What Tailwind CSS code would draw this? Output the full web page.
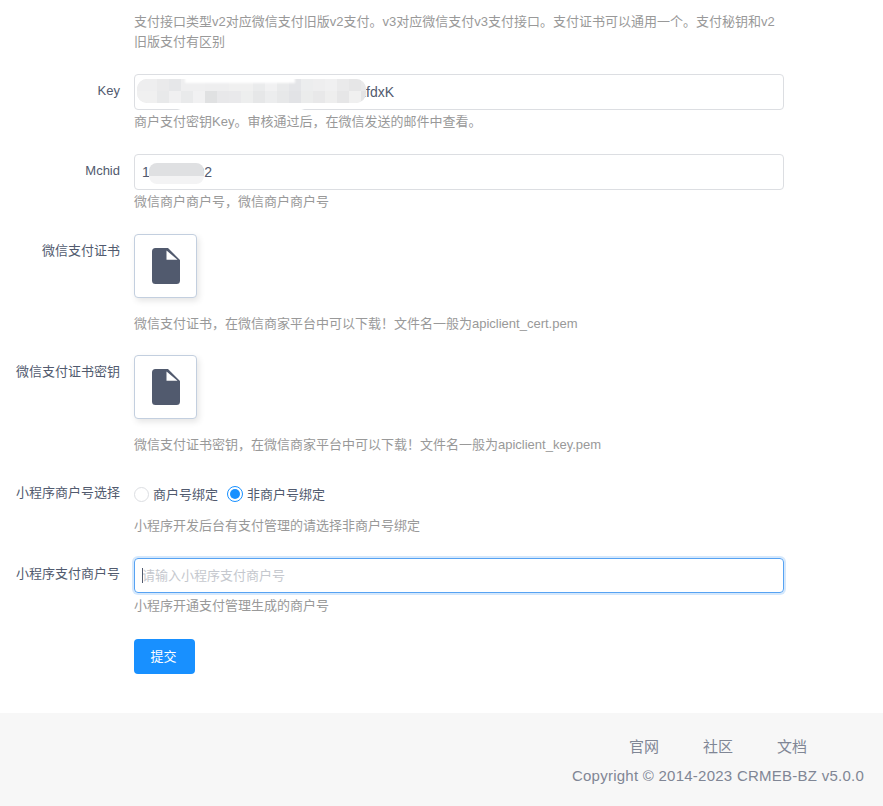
<!DOCTYPE html>
<html lang="zh-CN">
<head>
    <meta charset="UTF-8">
    <title>支付配置</title>
    <script src="https://cdn.jsdelivr.net/npm/@tailwindcss/browser@4"></script>
</head>
<body class="bg-white font-['Liberation_Sans','Noto_Sans_CJK_SC',sans-serif] text-[13px] text-[#515a6e] h-[806px] overflow-hidden">
    <div class="h-[713px] pt-[12px]">
        <!-- 接口类型说明 -->
        <div class="pl-[134px] mb-[22px]">
            <p class="w-[650px] leading-[20px] text-[#999]">支付接口类型v2对应微信支付旧版v2支付。v3对应微信支付v3支付接口。支付证书可以通用一个。支付秘钥和v2<br>旧版支付有区别</p>
        </div>

        <!-- Key -->
        <div class="flex mb-[22px]">
            <label class="w-[120px] shrink-0 text-right leading-[34px]">Key</label>
            <div class="ml-[14px] w-[650px]">
                <div class="relative">
                    <input type="text" value="xxxxxxxxxxxxxxxxxxxxxxxxxxxxxxxxfdxK" class="w-full h-[36px] px-[7px] border border-[#dcdee2] rounded-[4px] text-[14px] text-[#515a6e] outline-none">
                    <!-- 打码 -->
                    <div class="absolute left-[45px] top-[28px] w-[124px] h-[10px] bg-white blur-[1px]"></div>
                    <div class="absolute left-[3px] top-[5px] w-[229px] h-[24px] rounded-[10px] overflow-hidden blur-[0.5px] flex flex-col bg-[#ececed]">
                        <div class="flex h-[12px]">
                            <div class="w-[20px] bg-[#eeeeef]"></div>
                            <div class="w-[12px] bg-[#eaeaeb]"></div>
                            <div class="w-[12px] bg-[#e6e7e9]"></div>
                            <div class="w-[24px] bg-[#efeff0]"></div>
                            <div class="w-[24px] bg-[#eeeeef]"></div>
                            <div class="w-[24px] bg-[#f0f0f0]"></div>
                            <div class="w-[12px] bg-[#eaebec]"></div>
                            <div class="w-[12px] bg-[#f1f1f2]"></div>
                            <div class="w-[12px] bg-[#e9eaeb]"></div>
                            <div class="w-[12px] bg-[#e4e5e8]"></div>
                            <div class="w-[12px] bg-[#ecedee]"></div>
                            <div class="w-[12px] bg-[#eeeeef]"></div>
                            <div class="w-[12px] bg-[#f0f0f1]"></div>
                            <div class="w-[12px] bg-[#eaeaeb]"></div>
                            <div class="w-[12px] bg-[#e6e6e7]"></div>
                            <div class="flex-1 bg-[#e9e9ea]"></div>
                        </div>
                        <div class="flex h-[12px]">
                            <div class="w-[20px] bg-[#f0f0f0]"></div>
                            <div class="w-[12px] bg-[#e8e9ea]"></div>
                            <div class="w-[12px] bg-[#f0f0f1]"></div>
                            <div class="w-[12px] bg-[#e9eaeb]"></div>
                            <div class="w-[12px] bg-[#f1f1f2]"></div>
                            <div class="w-[12px] bg-[#e0e1e2]"></div>
                            <div class="w-[12px] bg-[#e8e8ea]"></div>
                            <div class="w-[12px] bg-[#e9e9eb]"></div>
                            <div class="w-[12px] bg-[#edeeee]"></div>
                            <div class="w-[12px] bg-[#e6e7e8]"></div>
                            <div class="w-[12px] bg-[#ecedee]"></div>
                            <div class="w-[12px] bg-[#e7e8e9]"></div>
                            <div class="w-[12px] bg-[#e2e3e6]"></div>
                            <div class="w-[12px] bg-[#ebecec]"></div>
                            <div class="w-[12px] bg-[#e8e8e9]"></div>
                            <div class="w-[12px] bg-[#eeeeee]"></div>
                            <div class="w-[12px] bg-[#e6e6e7]"></div>
                            <div class="w-[12px] bg-[#f0f0f0]"></div>
                            <div class="flex-1 bg-[#e4e4e5]"></div>
                        </div>
                    </div>
                    <div class="absolute left-[51px] top-[3px] w-[110px] h-[6px] bg-white blur-[1px]"></div>
                </div>
                <p class="mt-[2px] leading-[20px] text-[#999]">商户支付密钥Key。审核通过后，在微信发送的邮件中查看。</p>
            </div>
        </div>

        <!-- Mchid -->
        <div class="flex mb-[22px]">
            <label class="w-[120px] shrink-0 text-right leading-[34px]">Mchid</label>
            <div class="ml-[14px] w-[650px]">
                <div class="relative">
                    <input type="text" value="100000002" class="w-full h-[36px] px-[7px] border border-[#dcdee2] rounded-[4px] text-[14px] text-[#515a6e] outline-none">
                    <div class="absolute left-[15px] top-[9px] w-[55px] h-[21px] rounded-[8px] overflow-hidden blur-[0.5px] flex flex-col">
                        <div class="h-[13px] bg-[#dfe0e2]"></div>
                        <div class="flex-1 bg-[#f3f3f4]"></div>
                    </div>
                </div>
                <p class="mt-[2px] leading-[20px] text-[#999]">微信商户商户号，微信商户商户号</p>
            </div>
        </div>

        <!-- 微信支付证书 -->
        <div class="flex mb-[21px]">
            <label class="w-[120px] shrink-0 text-right leading-[34px]">微信支付证书</label>
            <div class="ml-[14px] w-[650px]">
                <div class="w-[63px] h-[64px] flex items-center justify-center bg-white border border-[#c3cfdf] rounded-[4px] shadow-[2px_3px_6px_rgba(0,0,0,0.1)]">
                    <svg class="w-[28px] h-[36px]" viewBox="0 0 28 36"><path d="M3.500 0H16L28 12V32.500a3.500 3.500 0 0 1-3.500 3.500H3.500a3.500 3.500 0 0 1-3.500-3.500V3.500a3.500 3.500 0 0 1 3.500-3.500Z" fill="#515a6e"/><path d="M14.500 2.500V11.700H25.500Z" fill="#fff"/></svg>
                </div>
                <p class="mt-[16px] leading-[20px] text-[#999]">微信支付证书，在微信商家平台中可以下载！文件名一般为apiclient_cert.pem</p>
            </div>
        </div>

        <!-- 微信支付证书密钥 -->
        <div class="flex mb-[21px]">
            <label class="w-[120px] shrink-0 text-right leading-[33px]">微信支付证书密钥</label>
            <div class="ml-[14px] w-[650px]">
                <div class="w-[63px] h-[64px] flex items-center justify-center bg-white border border-[#c3cfdf] rounded-[4px] shadow-[2px_3px_6px_rgba(0,0,0,0.1)]">
                    <svg class="w-[28px] h-[36px]" viewBox="0 0 28 36"><path d="M3.500 0H16L28 12V32.500a3.500 3.500 0 0 1-3.500 3.500H3.500a3.500 3.500 0 0 1-3.500-3.500V3.500a3.500 3.500 0 0 1 3.500-3.500Z" fill="#515a6e"/><path d="M14.500 2.500V11.700H25.500Z" fill="#fff"/></svg>
                </div>
                <p class="mt-[16px] leading-[20px] text-[#999]">微信支付证书密钥，在微信商家平台中可以下载！文件名一般为apiclient_key.pem</p>
            </div>
        </div>

        <!-- 小程序商户号选择 -->
        <div class="flex mb-[21px]">
            <label class="w-[120px] shrink-0 text-right leading-[34px]">小程序商户号选择</label>
            <div class="ml-[14px] w-[650px]">
                <div class="h-[36px] flex items-center">
                    <span class="w-[15px] h-[15px] rounded-full border border-[#dcdee2] bg-white"></span>
                    <span class="ml-[4px] mr-[9px] translate-y-[1px]">商户号绑定</span>
                    <span class="w-[16px] h-[16px] rounded-full border border-[#1890ff] flex items-center justify-center"><span class="w-[10px] h-[10px] rounded-full bg-[#1890ff]"></span></span>
                    <span class="ml-[4px] translate-y-[1px]">非商户号绑定</span>
                </div>
                <p class="mt-[4px] leading-[20px] text-[#999]">小程序开发后台有支付管理的请选择非商户号绑定</p>
            </div>
        </div>

        <!-- 小程序支付商户号 -->
        <div class="flex mb-[23px]">
            <label class="w-[120px] shrink-0 text-right leading-[34px]">小程序支付商户号</label>
            <div class="ml-[14px] w-[650px]">
                <div class="relative mt-[1px]">
                    <input type="text" placeholder="请输入小程序支付商户号" class="block w-full h-[35px] px-[7px] border border-[#57a3f3] rounded-[4px] text-[13px] text-[#515a6e] outline-none shadow-[0_0_0_2px_rgba(45,140,240,0.2)] placeholder:text-[#c5c8ce]">
                    <!-- 光标 -->
                    <span class="absolute left-[8px] top-[10px] w-px h-[15px] bg-[#515a6e]"></span>
                </div>
                <p class="mt-[3px] leading-[20px] text-[#999]">小程序开通支付管理生成的商户号</p>
            </div>
        </div>

        <div class="pl-[134px]">
            <button class="w-[61px] h-[35px] pr-[2px] rounded-[4px] bg-[#1890ff] text-white text-[13px]">提交</button>
        </div>
    </div>

    <footer class="h-[93px] bg-[#f7f7f7] flex justify-end pr-[19px] pt-[24px] text-[#808695]">
        <div class="flex flex-col items-center">
            <div class="flex gap-[44px] text-[15px] leading-[20px]">
                <a>官网</a>
                <a>社区</a>
                <a>文档</a>
            </div>
            <p class="mt-[9px] text-[15px] tracking-[0.25px] leading-[20px]">Copyright © 2014-2023 CRMEB-BZ v5.0.0</p>
        </div>
    </footer>
</body>
</html>
